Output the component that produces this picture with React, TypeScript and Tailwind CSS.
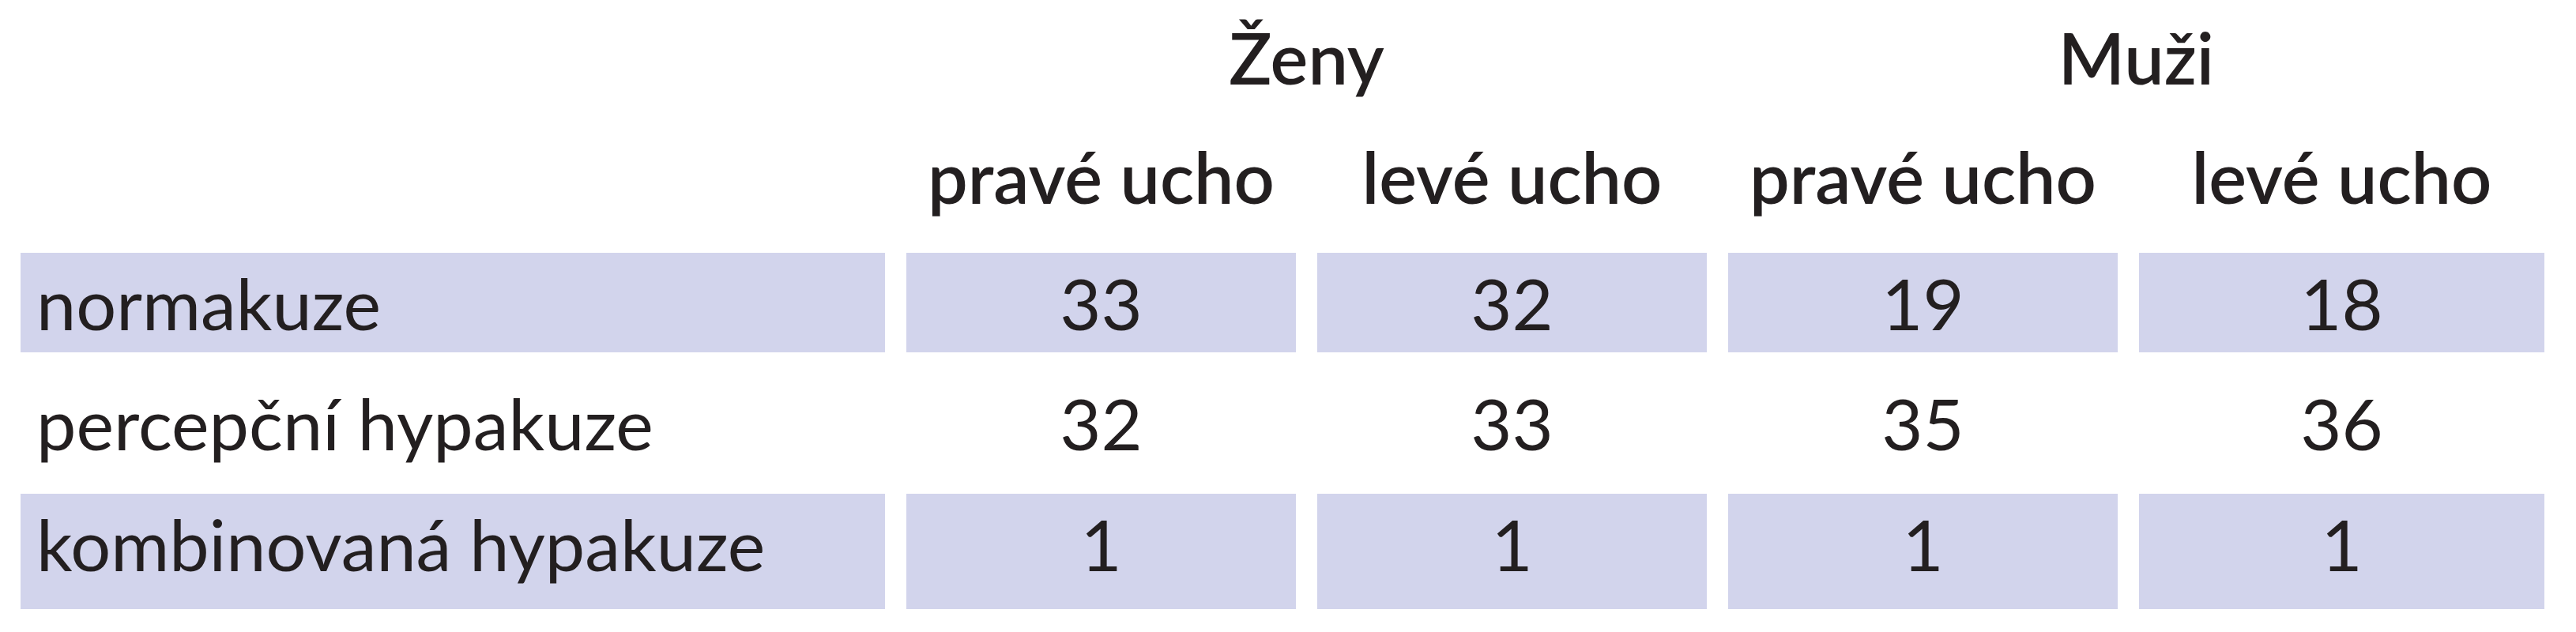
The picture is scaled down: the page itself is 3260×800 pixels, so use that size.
import React from "react";

const ROWS = [
  { label: "normakuze", values: [33, 32, 19, 18], shaded: true, h: "h-[126px]", mt: "" },
  { label: "percepční hypakuze", values: [32, 33, 35, 36], shaded: false, h: "h-[127px]", mt: "mt-[26px]" },
  { label: "kombinovaná hypakuze", values: [1, 1, 1, 1], shaded: true, h: "h-[146px]", mt: "mt-[26px]" },
];

const EARS = ["pravé ucho", "levé ucho", "pravé ucho", "levé ucho"];

const GRID = "grid grid-cols-[1094px_493px_493px_493px_513px] gap-x-[27px]";

export default function App() {
  return (
    <div
      className="w-[3260px] h-[800px] bg-white pl-[26px] text-[#231f20] text-[90px] leading-none"
      style={{ fontFamily: "Lato, 'Open Sans', sans-serif" }}
    >
      {/* group headings */}
      <div className={`${GRID} h-[151px] pt-[27px] font-semibold`}>
        <div />
        <div className="col-span-2 text-center">Ženy</div>
        <div className="col-span-2 text-center">Muži</div>
      </div>

      {/* ear headings */}
      <div className={`${GRID} h-[169px] pt-[27px] font-semibold`}>
        <div />
        {EARS.map((e, i) => (
          <div key={i} className="text-center whitespace-nowrap">
            {e}
          </div>
        ))}
      </div>

      {/* data rows */}
      {ROWS.map((row) => (
        <div key={row.label} className={`${GRID} ${row.h} ${row.mt}`}>
          <div className={`pt-[18px] pl-[20px] whitespace-nowrap ${row.shaded ? "bg-[#d2d4ec]" : ""}`}>
            {row.label}
          </div>
          {row.values.map((v, i) => (
            <div
              key={i}
              className={`pt-[18px] text-center ${row.shaded ? "bg-[#d2d4ec]" : ""}`}
            >
              {v}
            </div>
          ))}
        </div>
      ))}
    </div>
  );
}
